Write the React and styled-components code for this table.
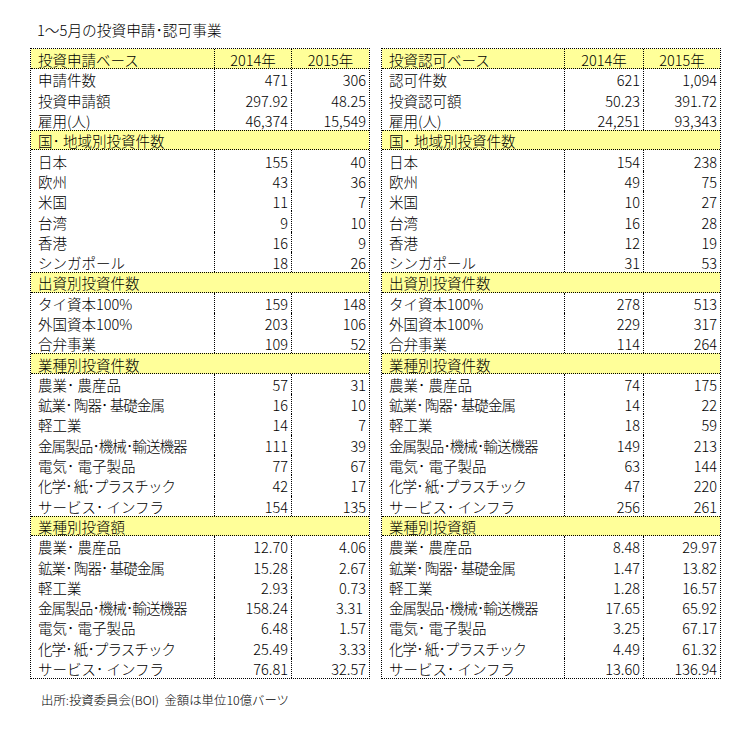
import React from "react";
import styled, { createGlobalStyle } from "styled-components";

const Global = createGlobalStyle`
  html, body { margin: 0; padding: 0; background: #fff; }
  body { font-family: "Noto Sans CJK JP", "Noto Sans", sans-serif; color: #000; }
`;

const Page = styled.div`
  width: 750px;
  height: 729px;
  box-sizing: border-box;
  padding: 20px 0 0 30px;
`;

const Title = styled.div`
  height: 20px;
  line-height: 20px;
  font-size: 14.7px;
  font-weight: 300;
  padding-left: 7px;
  margin-bottom: 8px;
`;

const Tables = styled.div`
  display: flex;
  gap: 11px;
  align-items: flex-start;
`;

const TableBox = styled.div`
  width: 340px;
  box-sizing: border-box;
  border: 1px dotted #000;
  font-size: 14.5px;
  font-weight: 300;
  line-height: 16px;
`;

const Row = styled.div`
  display: grid;
  grid-template-columns: ${(p) => p.$cols};
  height: 20.3px;
  box-sizing: border-box;
  background: ${(p) => (p.$head ? "#ffff99" : "#fff")};
  border-bottom: ${(p) => (p.$head ? "1px dotted #000" : "none")};
`;

const SectionRow = styled.div`
  height: 20.3px;
  box-sizing: border-box;
  background: #ffff99;
  border-top: 1px dotted #000;
  border-bottom: 1px dotted #000;
  display: flex;
  align-items: center;
  padding: 2px 0 0 7px;
  white-space: nowrap;
`;

const Cell = styled.div`
  display: flex;
  align-items: center;
  justify-content: ${(p) =>
    p.$align === "right" ? "flex-end" : p.$align === "center" ? "center" : "flex-start"};
  padding: 2px ${(p) => (p.$align === "right" ? `${p.$pr || 3}px` : "0")} 0
    ${(p) => (p.$align === "left" ? "7px" : "0")};
  border-left: ${(p) => (p.$sep ? "1px dotted #000" : "none")};
  white-space: nowrap;
  letter-spacing: ${(p) => (p.$tight ? "-0.9px" : "0")};
`;

const Footer = styled.div`
  margin-top: 13px;
  padding-left: 11px;
  font-size: 12.4px;
  font-weight: 300;
  line-height: 16px;
`;

const sectors = [
  "農業･ 農産品",
  "鉱業･ 陶器･ 基礎金属",
  "軽工業",
  "金属製品･機械･輸送機器",
  "電気･ 電子製品",
  "化学･ 紙･プラスチック",
  "サービス･ インフラ",
];

const countries = ["日本", "欧州", "米国", "台湾", "香港", "シンガポール"];
const capital = ["タイ資本100%", "外国資本100%", "合弁事業"];

const build = (base, topLabels, top, ctry, cap, secCnt, secAmt) => [
  { type: "head", label: base },
  ...topLabels.map((l, i) => ({ label: l, v: top[i] })),
  { type: "section", label: "国･ 地域別投資件数" },
  ...countries.map((l, i) => ({ label: l, v: ctry[i] })),
  { type: "section", label: "出資別投資件数" },
  ...capital.map((l, i) => ({ label: l, v: cap[i] })),
  { type: "section", label: "業種別投資件数" },
  ...sectors.map((l, i) => ({ label: l, v: secCnt[i] })),
  { type: "section", label: "業種別投資額" },
  ...sectors.map((l, i) => ({ label: l, v: secAmt[i] })),
];

const left = build(
  "投資申請ベース",
  ["申請件数", "投資申請額", "雇用(人)"],
  [["471", "306"], ["297.92", "48.25"], ["46,374", "15,549"]],
  [["155", "40"], ["43", "36"], ["11", "7"], ["9", "10"], ["16", "9"], ["18", "26"]],
  [["159", "148"], ["203", "106"], ["109", "52"]],
  [["57", "31"], ["16", "10"], ["14", "7"], ["111", "39"], ["77", "67"], ["42", "17"], ["154", "135"]],
  [["12.70", "4.06"], ["15.28", "2.67"], ["2.93", "0.73"], ["158.24", "3.31", 6], ["6.48", "1.57"], ["25.49", "3.33"], ["76.81", "32.57"]]
);

const right = build(
  "投資認可ベース",
  ["認可件数", "投資認可額", "雇用(人)"],
  [["621", "1,094"], ["50.23", "391.72"], ["24,251", "93,343"]],
  [["154", "238"], ["49", "75"], ["10", "27"], ["16", "28"], ["12", "19"], ["31", "53"]],
  [["278", "513"], ["229", "317"], ["114", "264"]],
  [["74", "175"], ["14", "22"], ["18", "59"], ["149", "213"], ["63", "144"], ["47", "220"], ["256", "261"]],
  [["8.48", "29.97"], ["1.47", "13.82"], ["1.28", "16.57"], ["17.65", "65.92"], ["3.25", "67.17"], ["4.49", "61.32"], ["13.60", "136.94"]]
);

function DataTable({ rows, cols }) {
  return (
    <TableBox>
      {rows.map((r, i) => {
        if (r.type === "section") return <SectionRow key={i}>{r.label}</SectionRow>;
        if (r.type === "head")
          return (
            <Row key={i} $cols={cols} $head>
              <Cell $align="left">{r.label}</Cell>
              <Cell $align="center" $sep>2014年</Cell>
              <Cell $align="center" $sep>2015年</Cell>
            </Row>
          );
        return (
          <Row key={i} $cols={cols}>
            <Cell $align="left" $tight={r.label.length > 10}>{r.label}</Cell>
            <Cell $align="right" $sep>{r.v[0]}</Cell>
            <Cell $align="right" $sep $pr={r.v[2]}>{r.v[1]}</Cell>
          </Row>
        );
      })}
    </TableBox>
  );
}

export default function App() {
  return (
    <>
      <Global />
      <Page>
        <Title>1～5月の投資申請･認可事業</Title>
        <Tables>
          <DataTable rows={left} cols="183px 77px 78px" />
          <DataTable rows={right} cols="182px 79px 77px" />
        </Tables>
        <Footer>出所:投資委員会(BOI)&nbsp;&nbsp;金額は単位10億バーツ</Footer>
      </Page>
    </>
  );
}
